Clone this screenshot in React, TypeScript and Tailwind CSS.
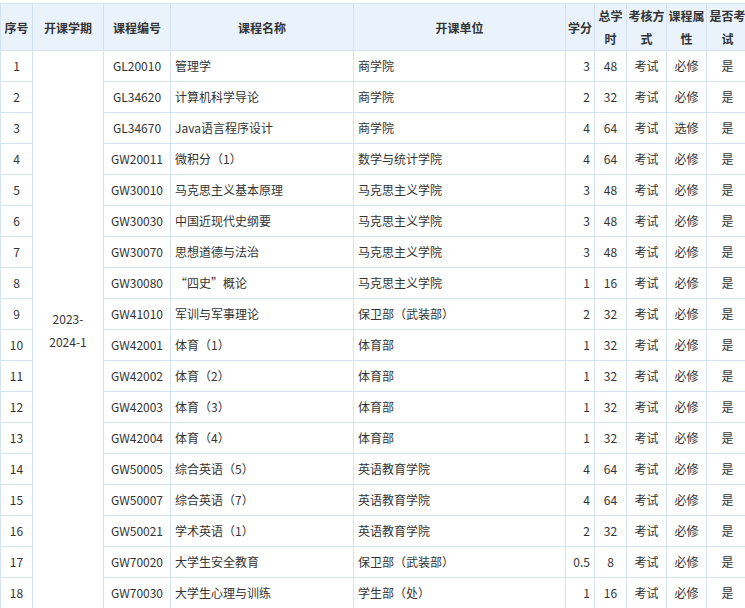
const rows: [string, string, string, string, string, string, string, string][] = [
  ["GL20010", "管理学", "商学院", "3", "48", "考试", "必修", "是"],
  ["GL34620", "计算机科学导论", "商学院", "2", "32", "考试", "必修", "是"],
  ["GL34670", "Java语言程序设计", "商学院", "4", "64", "考试", "选修", "是"],
  ["GW20011", "微积分（1）", "数学与统计学院", "4", "64", "考试", "必修", "是"],
  ["GW30010", "马克思主义基本原理", "马克思主义学院", "3", "48", "考试", "必修", "是"],
  ["GW30030", "中国近现代史纲要", "马克思主义学院", "3", "48", "考试", "必修", "是"],
  ["GW30070", "思想道德与法治", "马克思主义学院", "3", "48", "考试", "必修", "是"],
  ["GW30080", "“四史”概论", "马克思主义学院", "1", "16", "考试", "必修", "是"],
  ["GW41010", "军训与军事理论", "保卫部（武装部）", "2", "32", "考试", "必修", "是"],
  ["GW42001", "体育（1）", "体育部", "1", "32", "考试", "必修", "是"],
  ["GW42002", "体育（2）", "体育部", "1", "32", "考试", "必修", "是"],
  ["GW42003", "体育（3）", "体育部", "1", "32", "考试", "必修", "是"],
  ["GW42004", "体育（4）", "体育部", "1", "32", "考试", "必修", "是"],
  ["GW50005", "综合英语（5）", "英语教育学院", "4", "64", "考试", "必修", "是"],
  ["GW50007", "综合英语（7）", "英语教育学院", "4", "64", "考试", "必修", "是"],
  ["GW50021", "学术英语（1）", "英语教育学院", "2", "32", "考试", "必修", "是"],
  ["GW70020", "大学生安全教育", "保卫部（武装部）", "0.5", "8", "考试", "必修", "是"],
  ["GW70030", "大学生心理与训练", "学生部（处）", "1", "16", "考试", "必修", "是"],
];

const widths = [32, 71, 67, 183, 212, 29, 32, 40, 40, 42];

export default function App() {
  const td = "border border-[#d3e3f2] h-[31px] px-1 text-center align-middle";
  const th = "border border-[#d3e3f2] px-0 text-center align-middle font-bold leading-[23px] bg-[#eaf3fc] whitespace-nowrap overflow-hidden";
  return (
    <div className="w-[745px] h-[608px] overflow-hidden bg-white pt-[3px] text-[12px] text-[#333]" style={{ fontFamily: '"Noto Sans CJK SC", "Noto Sans", sans-serif' }}>
      <table className="border-collapse table-fixed w-[748px]">
        <colgroup>
          {widths.map((w, i) => <col key={i} style={{ width: w }} />)}
        </colgroup>
        <thead>
          <tr className="h-[47px]">
            <th className={th}>序号</th>
            <th className={th}>开课学期</th>
            <th className={th}>课程编号</th>
            <th className={th}>课程名称</th>
            <th className={th}>开课单位</th>
            <th className={th}>学分</th>
            <th className={th}>总学<br />时</th>
            <th className={th}>考核方<br />式</th>
            <th className={th}>课程属<br />性</th>
            <th className={th}>是否考<br />试</th>
          </tr>
        </thead>
        <tbody>
          {rows.map((r, i) => (
            <tr key={i}>
              <td className={td}>{i + 1}</td>
              {i === 0 && (
                <td rowSpan={18} className={`${td} leading-[23px]`}>2023-<br />2024-1</td>
              )}
              <td className={td}>{r[0]}</td>
              <td className={`${td} text-left`}>{r[1]}</td>
              <td className={`${td} text-left`}>{r[2]}</td>
              <td className={`${td} text-right`}>{r[3]}</td>
              <td className={td}>{r[4]}</td>
              <td className={td}>{r[5]}</td>
              <td className={td}>{r[6]}</td>
              <td className={td}>{r[7]}</td>
            </tr>
          ))}
        </tbody>
      </table>
    </div>
  );
}
